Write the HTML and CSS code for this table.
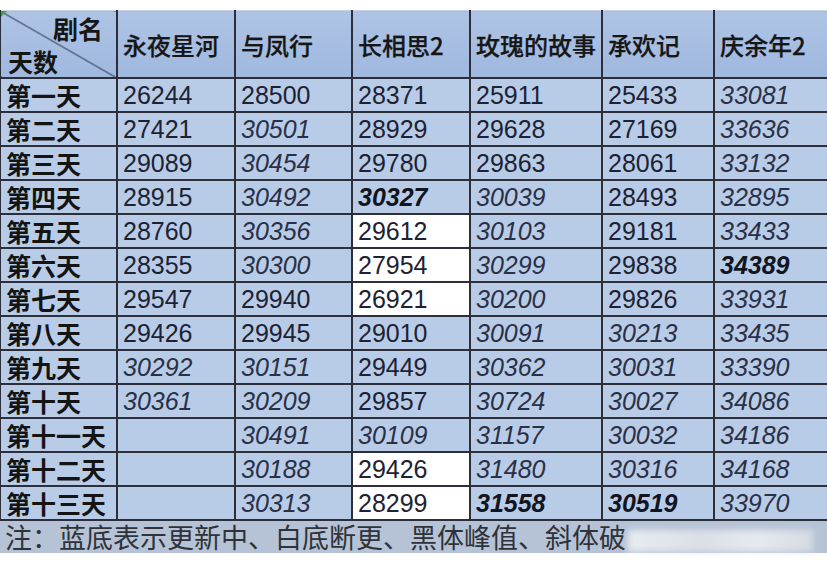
FILE: index.html
```html
<!DOCTYPE html>
<html lang="zh-CN">
<head>
<meta charset="utf-8">
<title>剧集热度</title>
<link rel="stylesheet" href="styles.css">
</head>
<body>
<div class="sheet">
<table class="grid">
<colgroup>
<col class="c0"><col class="c1"><col class="c2"><col class="c3"><col class="c4"><col class="c5"><col class="c6">
</colgroup>
<thead>
<tr class="head">
<th class="corner"><span class="mark"></span><span class="cn">剧名</span><span class="cd">天数</span></th>
<th>永夜星河</th><th>与凤行</th><th>长相思2</th><th>玫瑰的故事</th><th>承欢记</th><th>庆余年2</th>
</tr>
</thead>
<tbody>
<tr><th>第一天</th><td>26244</td><td>28500</td><td>28371</td><td>25911</td><td>25433</td><td class="i">33081</td></tr>
<tr><th>第二天</th><td>27421</td><td class="i">30501</td><td>28929</td><td>29628</td><td>27169</td><td class="i">33636</td></tr>
<tr><th>第三天</th><td>29089</td><td class="i">30454</td><td>29780</td><td>29863</td><td>28061</td><td class="i">33132</td></tr>
<tr><th>第四天</th><td>28915</td><td class="i">30492</td><td class="b">30327</td><td class="i">30039</td><td>28493</td><td class="i">32895</td></tr>
<tr><th>第五天</th><td>28760</td><td class="i">30356</td><td class="w">29612</td><td class="i">30103</td><td>29181</td><td class="i">33433</td></tr>
<tr><th>第六天</th><td>28355</td><td class="i">30300</td><td class="w">27954</td><td class="i">30299</td><td>29838</td><td class="b">34389</td></tr>
<tr><th>第七天</th><td>29547</td><td>29940</td><td class="w">26921</td><td class="i">30200</td><td>29826</td><td class="i">33931</td></tr>
<tr><th>第八天</th><td>29426</td><td>29945</td><td>29010</td><td class="i">30091</td><td class="i">30213</td><td class="i">33435</td></tr>
<tr><th>第九天</th><td class="i">30292</td><td class="i">30151</td><td>29449</td><td class="i">30362</td><td class="i">30031</td><td class="i">33390</td></tr>
<tr><th>第十天</th><td class="i">30361</td><td class="i">30209</td><td>29857</td><td class="i">30724</td><td class="i">30027</td><td class="i">34086</td></tr>
<tr><th>第十一天</th><td></td><td class="i">30491</td><td class="i">30109</td><td class="i">31157</td><td class="i">30032</td><td class="i">34186</td></tr>
<tr><th>第十二天</th><td></td><td class="i">30188</td><td class="w">29426</td><td class="i">31480</td><td class="i">30316</td><td class="i">34168</td></tr>
<tr><th>第十三天</th><td></td><td class="i">30313</td><td class="w">28299</td><td class="b">31558</td><td class="b">30519</td><td class="i">33970</td></tr>
</tbody>
<tfoot>
<tr class="foot"><td colspan="7"><span class="note">注：蓝底表示更新中、白底断更、黑体峰值、斜体破</span><span class="blur"></span></td></tr>
</tfoot>
</table>
</div>
</body>
</html>
```
FILE: styles.css
```css
html, body {
  margin: 0;
  padding: 0;
  background: #ffffff;
}
.sheet {
  width: 827px;
  height: 562px;
  overflow: hidden;
  padding-top: 10px;
  box-sizing: border-box;
}
.grid {
  border-collapse: collapse;
  table-layout: fixed;
  width: 829px;
  margin-left: -1px;
  font-family: "Liberation Sans", Arial, "Noto Sans CJK SC", sans-serif;
  color: #1d2233;
}
.c0 { width: 117px; }
.c1 { width: 118px; }
.c2 { width: 117px; }
.c3 { width: 118px; }
.c4 { width: 132px; }
.c5 { width: 112px; }
.c6 { width: 115px; }
.grid td, .grid th {
  border: 2px solid #2c2f3a;
  padding: 0 0 0 5px;
  text-align: left;
  white-space: nowrap;
  overflow: hidden;
}
.grid td {
  background: #b9cce7;
  font-size: 25px;
  height: 32px;
  line-height: 32px;
  padding-left: 5px;
}
.grid tbody th {
  background: #b9cce7;
  font-family: "Noto Sans CJK SC", sans-serif;
  font-weight: 700;
  font-size: 25px;
  color: #141414;
  height: 32px;
  line-height: 30px;
  padding-left: 5px;
}
.grid td.i {
  font-style: italic;
  color: #2a3046;
}
.grid td.b {
  font-style: italic;
  font-weight: 700;
  color: #111522;
}
.grid td.w {
  background: #ffffff;
}
.head th {
  height: 66px;
  background: linear-gradient(#aec4e5, #9fb8de);
  font-family: "Noto Sans CJK SC", sans-serif;
  font-weight: 500;
  font-size: 24px;
  color: #161616;
  padding-left: 5px;
  border-top: 1px solid #c9d4e4;
  -webkit-text-stroke: 0.25px #161616;
}
.head th.corner {
  position: relative;
  padding: 0;
  -webkit-text-stroke: 0;
  background:
    linear-gradient(to top right, transparent calc(50% - 1px), #2f3a55 50%, transparent calc(50% + 1px)),
    linear-gradient(#aec4e5, #9fb8de);
}
.cn, .cd {
  position: absolute;
  font-weight: 700;
  font-size: 25px;
  line-height: 1;
}
.cn {
  top: 5px;
  right: 13px;
}
.cd {
  left: 7px;
  bottom: 3px;
}
.mark {
  position: absolute;
  left: 0;
  top: 0;
  width: 0;
  height: 0;
  border-top: 6px solid #3da33a;
  border-right: 6px solid transparent;
}
.grid .foot td {
  background: #b6c3d6;
  font-family: "Noto Sans CJK SC", sans-serif;
  font-size: 27px;
  color: #2f3339;
  height: 32px;
  line-height: 30px;
  padding-left: 5px;
  border: none;
  border-top: 2px solid #2c2f3a;
  overflow: visible;
}
.note {
  font-weight: 400;
}
.blur {
  display: inline-block;
  vertical-align: middle;
  width: 185px;
  height: 22px;
  margin-left: 2px;
  background: linear-gradient(90deg, #eef0f3, #dfe3ea 40%, #eceef2 70%, #d9dde4);
  filter: blur(3px);
  opacity: 0.9;
}
```
